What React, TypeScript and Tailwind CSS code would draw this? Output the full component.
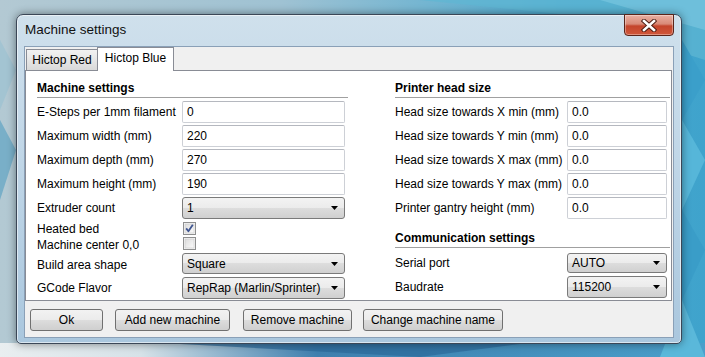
import React from "react";

const leftRows = [
  { label: "E-Steps per 1mm filament", value: "0" },
  { label: "Maximum width (mm)", value: "220" },
  { label: "Maximum depth (mm)", value: "270" },
  { label: "Maximum height (mm)", value: "190" },
];

const headRows = [
  { label: "Head size towards X min (mm)", value: "0.0" },
  { label: "Head size towards Y min (mm)", value: "0.0" },
  { label: "Head size towards X max (mm)", value: "0.0" },
  { label: "Head size towards Y max (mm)", value: "0.0" },
  { label: "Printer gantry height (mm)", value: "0.0" },
];

function Heading({ children }: { children: React.ReactNode }) {
  return (
    <div className="h-[18px] border-b border-[#a0a0a0] text-[12px] font-bold leading-[17px] text-black">
      {children}
    </div>
  );
}

function TextField({ value, width }: { value: string; width: string }) {
  return (
    <div
      className={`${width} h-[22px] rounded-[2px] border border-[#cdd0d6] border-t-[#b5b8bf] bg-white pl-[4px] text-[12px] leading-[20px] text-black`}
    >
      {value}
    </div>
  );
}

function Combo({ value, width, height }: { value: string; width: string; height: string }) {
  return (
    <div
      className={`${width} ${height} flex items-center justify-between rounded-[3px] border border-[#7a7a7a] bg-[linear-gradient(180deg,#f3f3f3_0%,#ebebeb_50%,#dddddd_50%,#d0d0d0_100%)] pl-[4px] pr-[6px] text-[12px] text-black`}
    >
      <span>{value}</span>
      <svg width="7" height="4" viewBox="0 0 7 4">
        <path d="M0 0H7L3.5 4Z" fill="#000" />
      </svg>
    </div>
  );
}

function Check({ checked }: { checked: boolean }) {
  return (
    <svg width="13" height="13" viewBox="0 0 13 13">
      <defs>
        <linearGradient id={checked ? "cbA" : "cbB"} x1="0" y1="0" x2="1" y2="1">
          <stop offset="0" stopColor="#dcdcdc" />
          <stop offset="1" stopColor="#fbfbfb" />
        </linearGradient>
      </defs>
      <rect x="0.5" y="0.5" width="12" height="12" fill="#f6f6f6" stroke="#8e8f8f" />
      <rect x="2" y="2" width="9" height="9" fill={`url(#${checked ? "cbA" : "cbB"})`} stroke="#c9c9c9" strokeWidth="0.6" />
      {checked && (
        <path d="M3.2 6.4L5.4 9.2L9.8 2.8" fill="none" stroke="#3f5590" strokeWidth="1.8" strokeLinejoin="round" />
      )}
    </svg>
  );
}

function Btn({ label, width }: { label: string; width: string }) {
  return (
    <div
      className={`${width} h-[22px] rounded-[3px] border border-[#707070] bg-[linear-gradient(180deg,#f2f2f2_0%,#ebebeb_50%,#dddddd_50%,#cfcfcf_100%)] text-center text-[12px] leading-[20px] text-black`}
    >
      {label}
    </div>
  );
}

function Desktop() {
  return (
    <svg className="absolute inset-0" width="705" height="357" viewBox="0 0 705 357">
      <polygon points="420,0 705,0 705,60 560,14" fill="#5fb6d3" opacity="0.7" />
      <polygon points="600,0 705,0 705,30" fill="#74c3dd" opacity="0.8" />
      <polygon points="682,40 705,80 682,120" fill="#3b9fca" />
      <polygon points="682,120 705,160 682,210" fill="#56b6d9" />
      <polygon points="682,210 705,250 682,300" fill="#3a9dc8" />
      <polygon points="682,300 705,357 660,357" fill="#5ab8da" />
      <polygon points="180,344 420,357 520,344" fill="#2c6a9a" opacity="0.7" />
      <polygon points="0,120 16,150 0,200" fill="#6aa9c6" opacity="0.8" />
      <polygon points="0,40 16,70 0,110" fill="#9fc3d2" opacity="0.8" />
    </svg>
  );
}

export default function App() {
  return (
    <div className="relative h-[357px] w-[705px] overflow-hidden bg-[linear-gradient(90deg,#b3c9d3_0%,#9fc2d3_40%,#4aa9cf_80%,#3fa3cc_100%)] font-['Liberation_Sans',Arial,sans-serif]">
      <div className="absolute inset-x-0 bottom-0 h-[14px] bg-[linear-gradient(90deg,#e9eef0_0%,#d6e2e8_20%,#3f7fae_45%,#4a9fca_100%)]" />
      <Desktop />

      {/* window */}
      <div className="absolute left-[16px] top-[14px] flex h-[330px] w-[666px] flex-col rounded-t-[7px] rounded-b-[5px] border border-[#3b4757] bg-[linear-gradient(180deg,#cfe0ec_0%,#c0d6e7_45%,#aac7de_100%)] shadow-[0_0_8px_rgba(0,0,0,0.45),inset_0_0_0_1px_rgba(255,255,255,0.55)]">
        <div className="relative flex h-[31px] items-center pl-[8px] text-[13.5px] text-[#111]">
          Machine settings
          <div className="absolute right-[7px] top-[-1px] flex h-[22px] w-[50px] items-center justify-center rounded-b-[4px] border border-[#5b2419] bg-[linear-gradient(180deg,#eab0a2_0%,#d98a77_45%,#c4452c_55%,#d0573a_100%)] shadow-[inset_0_0_0_1px_rgba(255,255,255,0.35)]">
            <svg width="16" height="13" viewBox="0 0 16 13">
              <path d="M3 2L13 11M13 2L3 11" stroke="#4a1a10" strokeWidth="4.4" strokeLinecap="square" />
              <path d="M3 2L13 11M13 2L3 11" stroke="#ffffff" strokeWidth="2.6" strokeLinecap="square" />
            </svg>
          </div>
        </div>

        {/* client area */}
        <div className="mx-[7px] mb-[5px] flex flex-1 flex-col border border-[#8aa0b7] bg-[#f0f0f0]">
          {/* tabs */}
          <div className="flex h-[23px] items-end pl-[1px]">
            <div className="h-[21px] w-[72px] border border-b-0 border-[#898c95] bg-[linear-gradient(180deg,#f2f2f2_0%,#e6e6e6_50%,#d9d9d9_100%)] text-center text-[12px] leading-[20px] text-black">
              Hictop Red
            </div>
            <div className="relative z-10 -mb-[1px] -ml-[1px] h-[24px] w-[77px] border border-b-0 border-[#898c95] bg-white text-center text-[12px] leading-[21px] text-black">
              Hictop Blue
            </div>
          </div>

          {/* pane */}
          <div className="mr-[1px] flex h-[231px] border border-[#898c95] bg-white pl-[11px] pt-[9px]">
            <div className="flex w-[311px] flex-col">
              <Heading>Machine settings</Heading>
              {leftRows.map((r, i) => (
                <div key={r.label} className={`flex h-[22px] items-center ${i === 0 ? "mt-[3px]" : "mt-[2px]"}`}>
                  <div className="w-[145px] text-[12px] text-black">{r.label}</div>
                  <TextField value={r.value} width="w-[163px]" />
                </div>
              ))}
              <div className="mt-[2px] flex h-[22px] items-center">
                <div className="w-[145px] text-[12px] text-black">Extruder count</div>
                <Combo value="1" width="w-[163px]" height="h-[22px]" />
              </div>
              <div className="mt-[3px] flex h-[13px] items-center">
                <div className="w-[146px] text-[12px] text-black">Heated bed</div>
                <Check checked />
              </div>
              <div className="mt-[2px] flex h-[13px] items-center">
                <div className="w-[146px] pt-[3px] text-[12px] text-black">Machine center 0,0</div>
                <Check checked={false} />
              </div>
              <div className="mt-[3px] flex h-[21px] items-center">
                <div className="w-[145px] pt-[2px] text-[12px] text-black">Build area shape</div>
                <Combo value="Square" width="w-[163px]" height="h-[21px]" />
              </div>
              <div className="mt-[3px] flex h-[22px] items-center">
                <div className="w-[145px] text-[12px] text-black">GCode Flavor</div>
                <Combo value="RepRap (Marlin/Sprinter)" width="w-[163px]" height="h-[22px]" />
              </div>
            </div>

            <div className="ml-[47px] flex w-[275px] flex-col">
              <Heading>Printer head size</Heading>
              {headRows.map((r, i) => (
                <div key={r.label} className={`flex h-[22px] items-center ${i === 0 ? "mt-[3px]" : "mt-[2px]"}`}>
                  <div className="w-[172px] text-[12px] text-black">{r.label}</div>
                  <TextField value={r.value} width="w-[100px]" />
                </div>
              ))}
              <div className="mt-[11px]">
                <Heading>Communication settings</Heading>
              </div>
              <div className="mt-[5px] flex h-[20px] items-center">
                <div className="w-[172px] text-[12px] text-black">Serial port</div>
                <Combo value="AUTO" width="w-[100px]" height="h-[20px]" />
              </div>
              <div className="mt-[3px] flex h-[22px] items-center">
                <div className="w-[172px] text-[12px] text-black">Baudrate</div>
                <Combo value="115200" width="w-[100px]" height="h-[22px]" />
              </div>
            </div>
          </div>

          {/* buttons */}
          <div className="mt-[8px] flex pl-[5px]">
            <Btn label="Ok" width="w-[73px]" />
            <div className="ml-[12px]">
              <Btn label="Add new machine" width="w-[115px]" />
            </div>
            <div className="ml-[13px]">
              <Btn label="Remove machine" width="w-[109px]" />
            </div>
            <div className="ml-[11px]">
              <Btn label="Change machine name" width="w-[140px]" />
            </div>
          </div>
        </div>
      </div>
    </div>
  );
}
